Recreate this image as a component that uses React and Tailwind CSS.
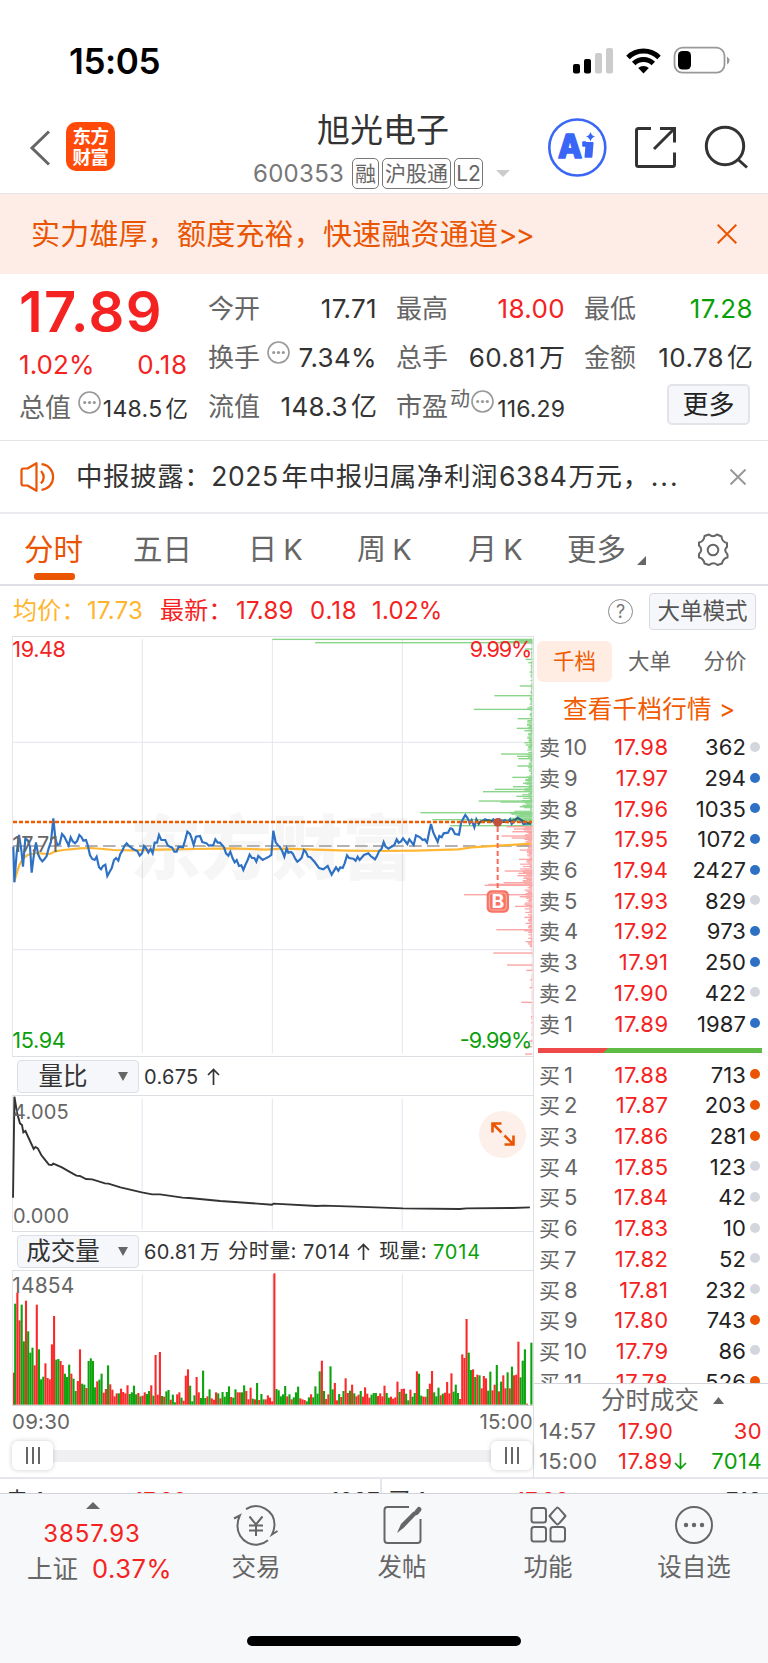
const SELL = [
  ["卖10", "17.98", 362, 0],
  ["卖9", "17.97", 294, 1],
  ["卖8", "17.96", 1035, 1],
  ["卖7", "17.95", 1072, 1],
  ["卖6", "17.94", 2427, 1],
  ["卖5", "17.93", 829, 0],
  ["卖4", "17.92", 973, 1],
  ["卖3", "17.91", 250, 1],
  ["卖2", "17.90", 422, 0],
  ["卖1", "17.89", 1987, 1],
];

const BUY = [
  ["买1", "17.88", 713, 1],
  ["买2", "17.87", 203, 1],
  ["买3", "17.86", 281, 1],
  ["买4", "17.85", 123, 0],
  ["买5", "17.84", 42, 0],
  ["买6", "17.83", 10, 0],
  ["买7", "17.82", 52, 0],
  ["买8", "17.81", 232, 0],
  ["买9", "17.80", 743, 1],
  ["买10", "17.79", 86, 0],
  ["买11", "17.78", 526, 1],
];

// One entry per minute, r = up, g = down
const VOLUME =
  "r96 g303 r336 r253 g300 g190 r312 g220 g156 g171 r118 r300 g166 g76 g84 r124 r80 r76 r181 r266 g135 g137 r131 r119 g93 g83 g120 r93 g78 g41 r71 r166 g63 g60 r50 g131 g139 g131 g52 r70 g75 g93 r36 r47 g118 r61 r45 r25 r34 g34 r48 r38 r34 r58 g32 g37 g57 g31 r35 g25 r27 r37 g32 g41 r58 g27 r149 r30 r158 g26 r24 g40 g44 r15 g30 g7 r31 r37 g21 r12 r87 r106 g57 g10 g28 r83 r37 g20 g102 g20 r25 g46 r19 r15 r37 g34 r19 g38 g24 g38 g55 r23 g21 g46 r37 r37 g37 g58 r41 r16 r51 g18 r16 g65 r14 g32 g16 r16 r28 r21 r10 r394 g47 g43 g25 g31 g56 r25 g31 r16 g22 g37 g54 r19 r16 r14 g10 g22 r31 g22 g55 g33 g100 r132 g41 r17 r31 g115 g46 r65 r13 g32 r23 g41 r79 r35 g42 r60 g34 r25 r30 g41 r24 r52 r33 r21 g30 g35 g35 r26 r34 r25 r57 g35 g21 r24 r18 r22 r69 g38 r47 r48 g33 g13 r45 g24 g35 r100 g93 g27 r24 r24 g47 r63 r101 g37 g25 g51 r28 g33 r36 r68 r34 r94 g39 g60 g35 r17 r151 r140 r257 g156 g104 r106 g83 r90 g88 r49 r86 r79 g42 g99 r43 r60 g119 r40 g69 r88 r49 g97 r49 g114 r88 r90 r189 g82 g132 g166 r3 g0 g186".split(
    " "
  );

const PRICE_AM =
  "40,650 43,757 50,670 57,615 64,660 69,710 76,625 84,632 90,650 95,728 101,680 108,637 114,672 120,685 127,694 133,688 140,678 146,655 153,635 160,565 166,625 172,645 179,642 186,612 193,620 199,632 206,646 212,622 218,634 225,640 232,632 238,615 245,622 250,632 258,630 263,645 270,676 277,687 284,690 290,680 297,712 303,718 309,708 316,704 322,738 329,725 335,715 342,690 348,684 355,692 361,672 367,662 373,648 380,640 386,647 393,652 400,658 412,663 419,677 426,670 432,648 439,656 445,668 452,657 458,670 464,638 471,638 477,615 484,630 496,630 503,646 510,650 516,652 523,665 530,665 536,650 549,652 555,632 562,605 570,612 575,625 581,645 588,620 600,618 607,636 620,640 626,647 640,645 646,628 653,638 660,638 672,652 678,670 685,677 691,665 698,685 704,697 710,690 717,708 724,706 730,720 736,705 743,690 749,674 756,684 763,684 769,695 775,678 788,690 795,686";

const PRICE_PM =
  "0,686 12,680 19,675 25,602 32,637 38,645 44,650 52,664 58,680 65,655 70,668 78,666 84,672 91,687 97,695 104,690 110,683 117,660 123,666 129,680 136,682 149,696 162,714 175,718 188,708 200,734 213,712 220,722 226,712 233,714 239,700 246,676 252,684 265,686 272,692 278,680 284,690 297,675 310,670 317,678 330,688 336,678 343,662 349,658 356,636 362,650 370,656 388,645 395,628 401,638 408,634 414,625 427,642 433,628 446,645 453,616 465,622 473,630 479,628 486,638 492,608 498,582 505,608 518,636 523,618 530,622 536,610 549,608 556,595 562,597 570,612 582,614 588,580 595,565 601,555 608,565 614,580 620,570 628,592 634,568 641,582 647,574 654,572 660,568 672,573 680,575 685,568 698,578 704,568 712,574 720,570 728,576 735,568 740,582 750,572 758,563 768,570 775,582 790,580 798,582";

const AVG_AM =
  "43,755 50,730 58,705 70,685 84,674 95,672 110,669 130,671 150,672 165,664 190,660 240,655 270,654 310,657 340,660 400,661 480,659 580,657 700,655 795,659";
const AVG_PM = "0,659 60,656 150,659 250,662 350,663 450,662 580,658 620,652 700,647 798,641";

const RATIO =
  "38,443 42,140 50,190 58,220 64,225 68,247 74,243 98,297 103,291 110,295 120,315 130,328 142,344 150,345 155,341 180,352 200,364 222,377 232,378 250,387 268,388 305,400 315,401 350,412 412,427 442,433 465,433 530,443 550,444 640,453 790,464 795,461 920,468 940,467 1030,470 1170,475 1335,477 1355,475 1490,474 1539,472";

// Resting orders: [y, bar length]
const DEPTH_SPIKES = [
  [28, 780], [38, 652], [33, 52], [35, 96], [57, 22], [88, 20], [98, 12], [126, 8], [168, 38], [197, 114], [234, 15],
  [238, 176], [266, 44], [295, 47], [302, 24], [338, 24], [345, 20], [372, 94], [379, 46], [386, 42], [408, 45],
  [442, 60], [460, 28], [470, 58], [478, 113], [485, 148], [499, 48], [513, 161], [516, 96], [530, 38], [548, 336],
  [552, 62], [558, 45], [569, 300], [574, 150], [587, 246], [590, 78], [597, 55], [605, 60], [618, 92], [624, 62],
  [647, 50], [660, 38], [688, 40], [723, 83], [730, 42], [737, 45], [758, 86], [763, 132], [766, 143], [794, 205],
  [800, 38], [829, 52], [862, 24], [880, 20], [899, 108], [902, 24], [935, 20], [969, 117], [1005, 76], [1021, 18],
  [1050, 6], [1073, 8], [1117, 33], [1160, 4], [1177, 3], [1233, 10], [1250, 26], [1272, 22],
];

const depthSpan = (y) => {
  if (y < 75) return y < 40 ? 40 : 5;
  if (y < 200) return 6;
  if (y < 270) return 9;
  if (y < 330) return 20;
  if (y < 440) return 16;
  if (y < 490) return 26;
  if (y < 540) return 34;
  if (y < 578) return 75;
  if (y < 650) return 30;
  if (y < 700) return 22;
  if (y < 780) return 38;
  if (y < 850) return 26;
  if (y < 950) return 14;
  return 3;
};

const DEPTH_FILL = Array.from({ length: 345 }, (_, i) => {
  const y = 28 + i * 3.53;
  const noise = ((i * 7919 + i * i * 31) % 97) / 97;
  return [y, depthSpan(y) * (0.2 + noise * 0.8)];
});

const depthColor = (y) => (y < 589 ? "#8ad58a" : "#fba6a6");

function StatusBar() {
  return (
    <div className="flex h-[100px] items-start justify-between pl-[69px] pr-[37px] pt-[46px]">
      <span className="text-[35px] font-semibold leading-[30px] tracking-[-0.4px] text-black">15:05</span>
      <svg width="158" height="30" viewBox="573 46 158 30" fill="none">
        <rect x="573" y="64" width="7" height="9.500" rx="2" fill="#000" />
        <rect x="584" y="59" width="7" height="14.500" rx="2" fill="#000" />
        <rect x="595" y="53" width="7" height="20.500" rx="2" fill="#ccc" />
        <rect x="606" y="48" width="7" height="25.500" rx="2" fill="#ccc" />
        <path d="M628 57.500a22 22 0 0 1 31 0M633.700 63.500a14 14 0 0 1 19.600 0" stroke="#000" strokeWidth="5" />
        <path d="M643.500 73.500l-5.300-5.400a7.500 7.500 0 0 1 10.600 0z" fill="#000" />
        <rect x="674.500" y="47.700" width="50" height="25" rx="8" stroke="#999" strokeWidth="1.800" />
        <rect x="678" y="51" width="13" height="18.500" rx="4.500" fill="#000" />
        <path d="M727 56.500q5 4 0 8z" fill="#999" />
      </svg>
    </div>
  );
}

function Tag({ children, className }) {
  return (
    <span
      className={`flex h-[31px] items-center justify-center rounded-[5px] border-[1.5px] border-[#777] text-[21px] leading-none text-[#666] ${className}`}
    >
      {children}
    </span>
  );
}

function Header() {
  return (
    <header className="flex h-[94px] border-b border-[#e6e6ea]">
      <div className="flex w-[242px] items-start pl-[29px] pt-[22px]">
        <svg className="mt-[7px]" width="22" height="38" viewBox="0 0 22 38" fill="none" stroke="#666" strokeWidth="3">
          <path d="M20 2.500L3 19l17 16.500" />
        </svg>
        <div className="ml-[15px] grid h-[49px] w-[49px] grid-cols-[18px_18px] content-center justify-center rounded-[10px] bg-[#ff4a0a] text-center text-[18.500px] font-bold leading-[20.500px] text-white">
          <span>东</span>
          <span>方</span>
          <span>财</span>
          <span>富</span>
        </div>
      </div>
      <div className="w-[282px]">
        <h1 className="pt-[9px] text-center text-[33px] leading-[42px] text-[#333]">旭光电子</h1>
        <div className="mt-[7px] flex h-[31px] items-center pl-[11px]">
          <span className="w-[99px] text-[24px] tracking-[0.3px] text-[#777]">600353</span>
          <Tag className="w-[27px]">融</Tag>
          <Tag className="ml-[3px] w-[69px]">沪股通</Tag>
          <Tag className="ml-[3px] w-[29px]">L2</Tag>
          <svg className="ml-[13px]" width="14" height="7" viewBox="0 0 14 7" fill="#ccc">
            <path d="M0 0h14l-7 7z" />
          </svg>
        </div>
      </div>
      <svg className="ml-[22px] mt-[16px]" width="206" height="64" viewBox="546 116 206 64" fill="none">
        <circle cx="577.300" cy="147.500" r="28" stroke="#3a66f7" strokeWidth="2.600" />
        <g fill="#3a66f7" stroke="#3a66f7" strokeWidth="1.600" strokeLinejoin="round" fontWeight="800" fontSize="32">
          <text x="558" y="158" textLength="24" lengthAdjust="spacingAndGlyphs">
            A
          </text>
          <path d="M585.500 142h-2.500v4h2.500zM586.500 142.800h6.300l-1.200 14.200h-6.300z" />
        </g>
        <path d="M590.500 132q1.200 4 4.700 4.500q-3.500.8-4.700 5q-1.200-4.200-4.700-5q3.500-.5 4.700-4.500z" fill="#3a66f7" />
        <g stroke="#333" strokeWidth="3">
          <path d="M651 128.500h-12.500q-2 0-2 2v34q0 2 2 2h34q2 0 2-2v-12M660 128.500h14.500v14M674 129l-20 20" />
          <circle cx="725" cy="146" r="18.700" />
          <path d="M737.500 159l9.500 8.500" />
        </g>
      </svg>
    </header>
  );
}

function Banner() {
  return (
    <div className="flex h-[80px] items-center justify-between bg-[#fdede6] pl-[31px] pr-[31px] text-[#ea5504]">
      <span className="text-[29px] leading-none tracking-[0.2px]">
        实力雄厚，额度充裕，快速融资通道<span className="tracking-[-1.800px]">&gt;&gt;</span>
      </span>
      <svg width="20" height="20" viewBox="0 0 20 20" stroke="currentColor" strokeWidth="2">
        <path d="M.7.7l18.600 18.600M19.300.7L.7 19.300" />
      </svg>
    </div>
  );
}

function MoreDot({ className }) {
  return (
    <svg className={`shrink-0 ${className}`} width="23" height="23" viewBox="0 0 23 23" fill="#999">
      <circle cx="11.500" cy="11.500" r="10.500" fill="none" stroke="#999" strokeWidth="1.600" />
      <circle cx="6.700" cy="11.500" r="1.600" />
      <circle cx="11.500" cy="11.500" r="1.600" />
      <circle cx="16.300" cy="11.500" r="1.600" />
    </svg>
  );
}

function Stat({ label, value, unit, tone = "text-[#333]", info }) {
  return (
    <div className="flex h-[49px] items-center text-[26px]">
      <span className="text-[#666]">{label}</span>
      {info ? <MoreDot className="-mt-[11px] ml-[7px]" /> : null}
      <span className={`ml-auto whitespace-nowrap tracking-[0.35px] ${tone}`}>{value}</span>
      {unit ? <span className="ml-[3px] text-[#333]">{unit}</span> : null}
    </div>
  );
}

function Quote() {
  return (
    <section className="flex h-[167px] border-b-[1.5px] border-[#e4e4e8] pl-[19px] pr-[15px] pt-[10px]">
      <div className="mr-[20px] w-[169px]">
        <div className="h-[56px] text-[56px] font-semibold leading-[56px] tracking-[1.400px] text-[#f52222]">17.89</div>
        <div className="flex h-[48px] items-center justify-between text-[26px] tracking-[0.1px] text-[#f52222]">
          <span>1.02%</span>
          <span className="tracking-[0.8px]">0.18</span>
        </div>
        <div className="flex h-[38px] items-center text-[26px] text-[#666]">
          总值
          <MoreDot className="-mt-[10px] ml-[7px]" />
          <span className="ml-auto mt-[4px] whitespace-nowrap text-[23px] tracking-[0.3px] text-[#333]">148.5</span>
          <span className="ml-[3px] mt-[4px] text-[22.500px] text-[#333]">亿</span>
        </div>
      </div>
      <div className="mr-[20px] w-[169px]">
        <Stat label="今开" value="17.71" />
        <Stat label="换手" value="7.34%" info />
        <Stat label="流值" value="148.3" unit="亿" />
      </div>
      <div className="-ml-px mr-[20px] w-[169px]">
        <Stat label="最高" value="18.00" tone="text-[#f52222]" />
        <Stat label="总手" value="60.81" unit="万" />
        <div className="flex h-[49px] items-center text-[26px] text-[#666]">
          市盈
          <span className="-mt-[16px] ml-[2px] text-[20px]">动</span>
          <MoreDot className="-mt-[10px] ml-[1px]" />
          <span className="ml-auto mt-[5px] text-[23px] tracking-[0.1px] text-[#333]">116.29</span>
        </div>
      </div>
      <div className="-ml-px w-[169px]">
        <Stat label="最低" value="17.28" tone="text-[#0a9f0a]" />
        <Stat label="金额" value="10.78" unit="亿" />
        <button
          type="button"
          className="ml-auto mr-[3px] mt-[2px] flex h-[41px] w-[83px] items-center justify-center rounded-[5px] border-2 border-[#e2e4ea] bg-[#f6f7fa] text-[26px] leading-none text-[#222]"
        >
          更多
        </button>
      </div>
    </section>
  );
}

function News() {
  return (
    <div className="flex h-[73px] items-center border-b-2 border-[#ececf0] pl-[20px] pr-[22px]">
      <svg width="35" height="30" viewBox="0 0 35 30" fill="none" stroke="#ea5504" strokeWidth="2.200">
        <path d="M1.500 8.500q0-2 2-2h4L16.500 1.200v27.600L7.500 23.500h-4q-2 0-2-2z" strokeLinejoin="round" />
        <path d="M21 9q5.500 6 0 12.500M21.500 2.200c15.500 2 15.500 23.600 0 25.600" />
      </svg>
      <span className="ml-[21px] whitespace-nowrap text-[26.500px] tracking-[0.55px] text-[#333]">
        中报披露：<span className="mr-[3px]">2025</span>年中报归属净利润<span className="ml-px mr-px">6384</span>万元，
        <span className="ml-px tracking-[2px]">...</span>
      </span>
      <svg className="ml-auto" width="16" height="16" viewBox="0 0 16 16" stroke="#999" strokeWidth="2">
        <path d="M.5.5l15 15M15.500.5l-15 15" />
      </svg>
    </div>
  );
}

const GEAR =
  "M12.500 1.500q4 3.500 8 0l4.500 2q.5 5.500 5.500 6.500v4q-2.500 2-1.500 4.500l2 3v3q-4.500.8-5.500 6l-4.500 1.500q-4-3.500-8.500 0l-4.500-1.500q-1-5.200-5.500-6v-3.500q4.500-4.500 0-8.500v-3q5-1 5.500-6.500z";

function Tabs() {
  return (
    <nav className="flex h-[72px] whitespace-nowrap border-b-2 border-[#dedfe4] text-[29.500px] leading-[71px] text-[#666]">
      <span className="flex w-[109px] flex-col pl-[24px] text-[#ea5504]">
        <span className="h-[59px]">分时</span>
        <span className="ml-[10px] h-[7px] w-[41px] rounded-[3px] bg-[#ea5504]" />
      </span>
      <span className="w-[116px] pl-[24px]">五日</span>
      <span className="w-[107px] pl-[23px] text-[29px] [word-spacing:-2px]">日 K</span>
      <span className="w-[113px] pl-[25px] text-[29px] [word-spacing:-2px]">周 K</span>
      <span className="w-[97px] pl-[23px] text-[29px] [word-spacing:-2px]">月 K</span>
      <span className="w-[71px] pl-[25px]">更多</span>
      <svg className="ml-[24px] mt-[42px]" width="9" height="9" viewBox="0 0 9 9" fill="#666">
        <path d="M9 0v9H0z" />
      </svg>
      <svg className="ml-[50px] mt-[19px]" width="34" height="34" viewBox="0 0 33 34" fill="none" stroke="#666" strokeWidth="2">
        <path d={GEAR} strokeLinejoin="round" />
        <circle cx="16.500" cy="17" r="5.300" />
      </svg>
    </nav>
  );
}

function PriceInfo() {
  return (
    <div className="flex h-[50px] items-center whitespace-nowrap pl-[13px] pr-[12px] text-[24px] tracking-[0.25px] text-[#f52222]">
      <span className="w-[74px] text-[#ffb52e]">均价：</span>
      <span className="w-[73px] text-[#ffb52e]">17.73</span>
      <span className="w-[76px]">最新：</span>
      <span className="w-[74px]">17.89</span>
      <span className="w-[62px] tracking-[0.9px]">0.18</span>
      <span>1.02%</span>
      <span className="ml-auto flex size-[25px] items-center justify-center rounded-full border-[1.500px] border-[#888] text-[18px] tracking-normal text-[#777]">
        ?
      </span>
      <button
        type="button"
        className="ml-[16px] flex h-[37px] w-[107px] items-center justify-center rounded-[4px] border-[1.500px] border-[#d9dbe3] bg-[#f6f7fa] text-[22.500px] leading-none tracking-normal text-[#555]"
      >
        大单模式
      </button>
    </div>
  );
}

function PriceChart() {
  return (
    <svg className="block" width="521" height="419" viewBox="0 0 1563 1257" fill="none" fontSize="65">
      <g stroke="#e4e6ee" strokeWidth="3">
        <path d="M391 6v1242M781 6v1242M1171 6v1242M0 316h1560M0 938h1560M1.500 0v1257" />
      </g>
      <text x="355" y="710" fontSize="212" fontWeight="900" fill="#000" opacity="0.03">
        东方财富
      </text>
      <g transform="translate(759 -21)">
        {DEPTH_FILL.map(([y, w]) => (
          <rect key={y} x={802 - w} y={y - 1.5} width={w} height="3.600" fill={depthColor(y)} />
        ))}
        {DEPTH_SPIKES.map(([y, w]) => (
          <rect key={y} x={802 - w} y={y - 2} width={w} height="4.200" fill={depthColor(y)} />
        ))}
      </g>
      <path d="M3 627h1557" stroke="#999" strokeWidth="5" strokeDasharray="38 16" />
      <g transform="translate(-36 -21)">
        <polyline points={AVG_AM} stroke="#ffb733" strokeWidth="6.500" />
        <polyline points={PRICE_AM} stroke="#2e71c4" strokeWidth="6.500" />
      </g>
      <g transform="translate(759 -21)">
        <polyline points={AVG_PM} stroke="#ffb733" strokeWidth="6.500" />
        <polyline points={PRICE_PM} stroke="#2e71c4" strokeWidth="6.500" />
        <polyline points="634,568 641,582 647,574 672,570 698,578 728,576 758,565 798,582" stroke="#2d5f5a" strokeWidth="4" />
      </g>
      <path d="M3 555h1557" stroke="#f25a00" strokeWidth="7" strokeDasharray="12 6" />
      <circle cx="1457" cy="556" r="13" fill="#c2503c" />
      <path d="M1457 570v186" stroke="#f8695c" strokeWidth="6" strokeDasharray="15 9" />
      <rect x="1424" y="760" width="67" height="67" rx="15" fill="#fa7465" />
      <rect x="1432" y="768" width="51" height="51" rx="9" stroke="#fcb5ac" strokeWidth="3" />
      <text x="1457.500" y="814" textAnchor="middle" fontSize="58" fontWeight="700" fill="#fff">
        B
      </text>
      <text x="1" y="60" fill="#f52222" textLength="161">
        19.48
      </text>
      <text x="1561" y="60" fill="#f52222" textAnchor="end" textLength="188">
        9.99%
      </text>
      <text x="1" y="646" fill="#666" textLength="138">
        17.71
      </text>
      <text x="1" y="1233" fill="#0a9f0a" textLength="160">
        15.94
      </text>
      <text x="1561" y="1233" fill="#0a9f0a" textAnchor="end" textLength="218">
        -9.99%
      </text>
    </svg>
  );
}

function IndicatorBar({ name, children }) {
  return (
    <div className="flex h-[40px] items-center border-y-[1.500px] border-[#dedfe4] pl-[5px] pt-px text-[20px] text-[#333]">
      <button
        type="button"
        className="mr-[5px] flex h-[33px] w-[122px] items-center rounded-[4px] border-[1.500px] border-[#dcdee5] bg-[#f6f7fa] text-[24.500px] leading-none text-[#333]"
      >
        <span className="w-[90px] text-center">{name}</span>
        <svg className="ml-[10px]" width="10" height="9" viewBox="0 0 10 9" fill="#666">
          <path d="M0 0h10L5 9z" />
        </svg>
      </button>
      {children}
    </div>
  );
}

function UpArrow({ className }) {
  return (
    <svg className={className} width="13" height="17" viewBox="0 0 13 17" fill="none" stroke="currentColor" strokeWidth="1.700">
      <path d="M6.500 17V1.500M1 7l5.500-5.500L12 7" />
    </svg>
  );
}

function RatioChart() {
  return (
    <div className="relative h-[135px] text-[20px] text-[#666]">
      <svg className="block" width="521" height="135" viewBox="35 138 1513 405" preserveAspectRatio="none" fill="none">
        <path d="M413 146v392M791 146v392M1168 146v392M36 138v405" stroke="#e4e6ee" strokeWidth="3" />
        <polyline points={RATIO} stroke="#333" strokeWidth="1.900" vectorEffect="non-scaling-stroke" />
      </svg>
      <span className="absolute left-[1px] top-[3px] leading-[26px] tracking-[0.2px]">4.005</span>
      <span className="absolute bottom-[2px] left-[1px] leading-[26px] tracking-[0.2px]">0.000</span>
      <span className="absolute right-[7px] top-[14.500px] flex size-[47px] items-center justify-center rounded-full bg-[#fdf0ea]">
        <svg width="24" height="24" viewBox="0 0 24 24" fill="none" stroke="#ea5504" strokeWidth="2.600">
          <path d="M1.500 10.500v-9h9M1.500 1.500l9 9M22.500 13.500v9h-9M22.500 22.500l-9-9" />
        </svg>
      </span>
    </div>
  );
}

function VolumeChart() {
  return (
    <svg className="block" width="521" height="134" viewBox="0 0 1563 402" fontSize="63">
      <path d="M391 10v390M781 10v390M1171 10v390M1.500 0v402" stroke="#e4e6ee" strokeWidth="3" />
      <text x="1" y="67" fill="#666" textLength="186">
        14854
      </text>
      {VOLUME.map((bar, i) => {
        const h = Number(bar.slice(1));
        return (
          <rect
            key={i}
            x={Math.max(3, i * 6.479)}
            y={401 - h}
            width="6.300"
            height={h}
            fill={bar[0] === "r" ? "#fa2a2a" : "#0ca30c"}
          />
        );
      })}
    </svg>
  );
}

function Handle() {
  return (
    <span className="z-10 flex h-[29px] w-[41px] items-center justify-center gap-[4px] rounded-[6px] bg-white shadow-[0_0_5px_rgba(0,0,0,0.2)]">
      <span className="h-[17px] w-[2px] bg-[#666]" />
      <span className="h-[17px] w-[2px] bg-[#666]" />
      <span className="h-[17px] w-[2px] bg-[#666]" />
    </span>
  );
}

function OrderRow({ row, dot }) {
  const [label, price, volume, big] = row;
  return (
    <div className="flex h-[30.700px] items-center text-[22px] leading-none">
      <span className="w-[58px] whitespace-nowrap text-[#666]">
        <span className="mr-[4px] text-[21px]">{label[0]}</span>
        <span className="tracking-[0.3px]">{label.slice(1)}</span>
      </span>
      <span className="w-[71.500px] text-right tracking-[0.45px] text-[#f52222]">{price}</span>
      <span className="w-[77.500px] text-right tracking-[0.1px] text-[#222]">{volume}</span>
      <span className={`-mt-[1px] ml-[4px] size-[10px] rounded-full ${big ? dot : "bg-[#d3d6dd]"}`} />
    </div>
  );
}

function TradeRow({ time, price, volume, tone = "text-[#f52222]", down }) {
  return (
    <div className="flex h-[30px] shrink-0 items-center pl-[5px] pr-[6px] text-[22px] tracking-[0.4px] text-[#f52222]">
      <span className="w-[79px] text-[#666]">{time}</span>
      <span className="tracking-[0.6px]">{price}</span>
      {down ? <UpArrow className="ml-px rotate-180 text-[#0a9f0a]" /> : null}
      <span className={`ml-auto ${tone}`}>{volume}</span>
    </div>
  );
}

function OrderBook() {
  return (
    <aside className="flex h-[841px] w-[235px] flex-col border-l-[1.500px] border-[#dedfe4]">
      <div className="flex pl-[3px] pt-[5px] text-[21.500px] leading-[41px] text-[#666]">
        <span className="w-[75px] rounded-[6px] bg-[#ffede4] text-center text-[#f25a00]">千档</span>
        <span className="w-[75px] text-center">大单</span>
        <span className="w-[76px] text-center">分价</span>
      </div>
      <div className="pl-[29px] pt-[11px] text-[24.500px] leading-[32px] tracking-[0.3px] text-[#f25a00]">查看千档行情 &gt;</div>
      <div className="pl-[5px] pt-[7px]">
        {SELL.map((row) => (
          <OrderRow key={row[0]} row={row} dot="bg-[#2e71c4]" />
        ))}
      </div>
      <svg className="ml-[4px] mt-[9px] block shrink-0" width="224" height="5" viewBox="0 0 224 5">
        <path d="M0 0h224v5H0z" fill="#5dbb46" />
        <path d="M0 0h70l-5 5H0z" fill="#ee4848" />
      </svg>
      <div className="h-[330px] shrink-0 overflow-hidden pl-[5px] pt-[6.500px]">
        {BUY.map((row) => (
          <OrderRow key={row[0]} row={row} dot="bg-[#ea5504]" />
        ))}
      </div>
      <div className="flex h-[34px] shrink-0 items-center border-t-[1.500px] border-[#d5d6dc] pl-[67px] text-[24.500px] leading-none text-[#666]">
        分时成交
        <svg className="ml-[14px]" width="11" height="7" viewBox="0 0 11 7" fill="#666">
          <path d="M0 7h11L5.500 0z" />
        </svg>
      </div>
      <TradeRow time="14:57" price="17.90" volume={30} />
      <TradeRow time="15:00" price="17.89" volume={7014} tone="text-[#0a9f0a]" down />
    </aside>
  );
}

function PeekRow() {
  return (
    <div className="flex h-[16px] overflow-hidden border-t-2 border-[#e6e6ec] text-[22px] leading-[43px] tracking-[0.3px] text-[#333]">
      <div className="flex h-[43px] w-[382px] border-r-2 border-[#e6e6ec] pl-[6px]">
        <span className="w-[128px]">卖 1</span>
        <span className="text-[#f52222]">17.89</span>
        <span className="ml-auto">1987</span>
      </div>
      <div className="flex h-[43px] flex-1 pl-[6px] pr-[6px]">
        <span className="w-[128px]">买 1</span>
        <span className="text-[#f52222]">17.88</span>
        <span className="ml-auto">713</span>
      </div>
    </div>
  );
}

function FooterItem({ label, children }) {
  return (
    <div className="flex w-[146px] flex-col items-center pt-[10px] text-[24.500px] leading-[40px] text-[#666]">
      <svg width="46" height="42" viewBox="0 0 46 42" fill="none" stroke="#666" strokeWidth="2">
        {children}
      </svg>
      <span className="mt-[1px]">{label}</span>
    </div>
  );
}

function Footer() {
  return (
    <footer className="h-[170px] border-t-[1.500px] border-[#d2d3d9] bg-[#f7f8fa]">
      <div className="flex h-[142px]">
        <div className="flex w-[183px] flex-col items-center pt-[8px] text-[24px] leading-none tracking-[0.900px] text-[#f52222]">
          <svg className="ml-[2px]" width="14" height="7" viewBox="0 0 14 7" fill="#666">
            <path d="M0 7h14L7 0z" />
          </svg>
          <span className="ml-px mt-[13px]">3857.93</span>
          <span className="ml-[16px] mt-[9px] flex items-center gap-[14px] whitespace-nowrap leading-[28px]">
            <span className="text-[25.500px] tracking-normal text-[#666]">上证</span>
            <span className="text-[25.500px] tracking-[0.5px]">0.37%</span>
          </span>
        </div>
        <FooterItem label="交易">
          <path d="M13 5.200a18.500 18.500 0 0 1 28.500 16q-.3 5-2.500 9.300l5.500-3.500M35 36.300A18.500 18.500 0 0 1 4.500 21.500q0-5 2.300-10L1 14.500" />
          <path d="M16.500 12.500l6.500 8 6.500-8M23 20.500V32M16 21.500h14M16 26.500h14" />
        </FooterItem>
        <FooterItem label="发帖">
          <path d="M30 3H8.500q-3 0-3 3v30q0 3 3 3h30q3 0 3-3V15" />
          <path d="M18 29l4-9L34.500 7.500l3 3L24.500 24z" fill="#666" stroke="none" />
          <path d="M37.500 8.500l2.500-3" strokeWidth="5" strokeLinecap="round" />
        </FooterItem>
        <FooterItem label="功能">
          <rect x="6.500" y="4" width="14.500" height="14.500" rx="2.500" />
          <path d="M32.500 3.500q1 0 8 8.500-7 8.500-8 8.500t-8-8.500q7-8.500 8-8.500z" strokeLinejoin="round" />
          <rect x="6.500" y="23" width="14.500" height="14.500" rx="2.500" />
          <rect x="25.500" y="23" width="14.500" height="14.500" rx="2.500" />
        </FooterItem>
        <FooterItem label="设自选">
          <circle cx="23" cy="21" r="18" />
          <g fill="#666" stroke="none">
            <circle cx="15" cy="21" r="2.200" />
            <circle cx="23" cy="21" r="2.200" />
            <circle cx="31" cy="21" r="2.200" />
          </g>
        </FooterItem>
      </div>
      <div className="mx-auto h-[10px] w-[274px] rounded-full bg-black" />
    </footer>
  );
}

export default function App() {
  return (
    <div className="h-[1663px] w-[768px] overflow-hidden bg-white font-['Inter','Noto_Sans_CJK_SC',sans-serif]">
      <StatusBar />
      <Header />
      <Banner />
      <Quote />
      <News />
      <Tabs />
      <PriceInfo />
      <main className="flex">
        <div className="w-[533px] pl-[12px]">
          <div className="h-px bg-[#dedfe4]" />
          <PriceChart />
          <IndicatorBar name="量比">
            <span className="tracking-[0.3px]">0.675</span>
            <UpArrow className="ml-[8px]" />
          </IndicatorBar>
          <RatioChart />
          <IndicatorBar name="成交量">
            <span className="flex items-center whitespace-nowrap tracking-[0.35px]">
              <span className="w-[56px]">60.81</span>
              <span className="w-[28px]">万</span>
              <span className="w-[75px] text-[20.500px]">分时量:</span>
              <span className="w-[54px] tracking-[0.8px]">7014</span>
              <UpArrow className="mr-[9px]" />
              <span className="w-[54px] text-[20.500px]">现量:</span>
              <span className="tracking-[0.8px] text-[#0a9f0a]">7014</span>
            </span>
          </IndicatorBar>
          <VolumeChart />
          <div className="flex h-[32px] items-center justify-between border-t-[1.500px] border-[#d5d6dc] pt-px text-[20.500px] tracking-[0.2px] text-[#666]">
            <span>09:30</span>
            <span>15:00</span>
          </div>
          <div className="flex h-[37px] items-center pr-px">
            <Handle />
            <span className="h-[12px] flex-1 bg-[#f0f0f3]" />
            <Handle />
          </div>
        </div>
        <OrderBook />
      </main>
      <PeekRow />
      <Footer />
    </div>
  );
}
